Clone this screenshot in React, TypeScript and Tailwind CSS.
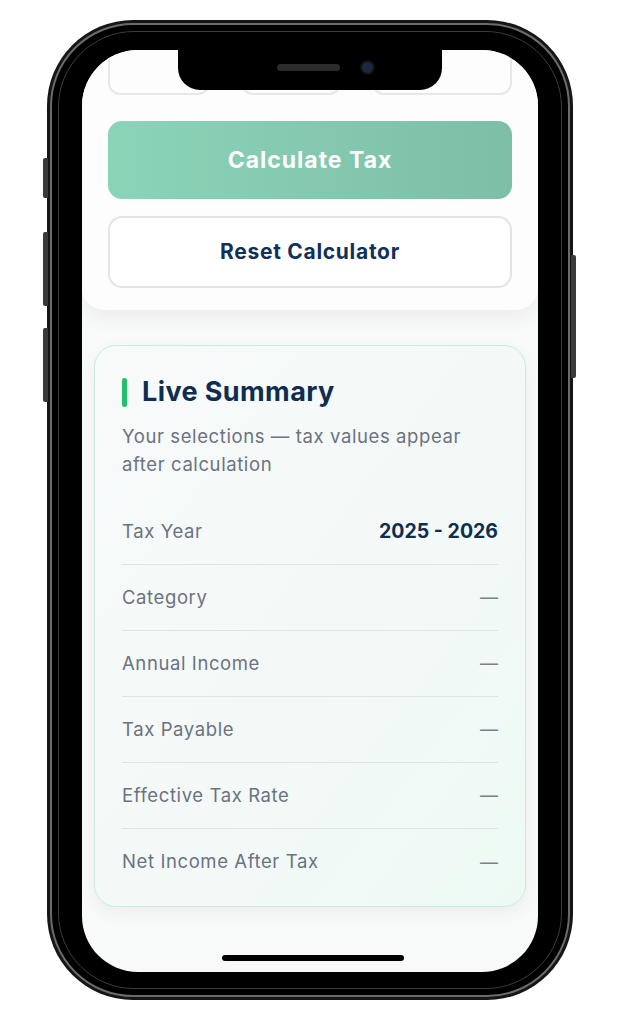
const rows: { label: string; value: string; strong?: boolean }[] = [
  { label: "Tax Year", value: "2025 - 2026", strong: true },
  { label: "Category", value: "—" },
  { label: "Annual Income", value: "—" },
  { label: "Tax Payable", value: "—" },
  { label: "Effective Tax Rate", value: "—" },
  { label: "Net Income After Tax", value: "—" },
];

function SummaryCard() {
  return (
    <div className="mx-[12px] mt-[35px] h-[562px] rounded-[22px] border border-[#c9ecdd] bg-gradient-to-br from-[#f8fafa] via-[#f4f9f8] to-[#edfaf4] px-[27px] pt-[32px] shadow-[0_6px_18px_rgba(0,0,0,0.05)]">
      <div className="flex h-[29px] items-center gap-[15px]">
        <div className="h-[29px] w-[5px] rounded-full bg-[#22c06a]" />
        <div className="text-[27px] font-bold tracking-[0.4px] text-[#0f2d50]">Live Summary</div>
      </div>
      <p className="mt-[15px] text-[18.5px] leading-[28px] tracking-[0.6px] text-[#6b7280]">
        Your selections — tax values appear after calculation
      </p>
      <div className="mt-[21px]">
        {rows.map((r, i) => (
          <div
            key={r.label}
            className={
              "flex h-[66px] items-center justify-between " +
              (i < rows.length - 1 ? "border-b border-[#dde5e4]" : "")
            }
          >
            <span className="text-[18.5px] tracking-[0.6px] text-[#6b7280]">{r.label}</span>
            {r.strong ? (
              <span className="text-[19.5px] font-bold text-[#0f2d50]">{r.value}</span>
            ) : (
              <span className="text-[18px] text-[#7a8088]">{r.value}</span>
            )}
          </div>
        ))}
      </div>
    </div>
  );
}

function FormPanel() {
  return (
    <div className="rounded-b-[22px] bg-[#fdfdfd] px-[26px] pb-[22px] shadow-[0_8px_20px_rgba(0,0,0,0.05)]">
      <div className="-mt-[35px] flex h-[80px] justify-between">
        <div className="w-[102px] rounded-[12px] border-2 border-[#e6e7e8]" />
        <div className="w-[100px] rounded-[12px] border-2 border-[#e6e7e8]" />
        <div className="w-[140px] rounded-[12px] border-2 border-[#e6e7e8]" />
      </div>
      <button className="mt-[26px] flex h-[78px] w-full items-center justify-center rounded-[14px] bg-gradient-to-r from-[#8bd4b8] to-[#7dbea7] text-[23px] font-bold tracking-[1px] text-white">
        Calculate Tax
      </button>
      <button className="mt-[17px] flex h-[72px] w-full items-center justify-center rounded-[14px] border-2 border-[#e2e4e6] bg-white text-[21px] font-bold tracking-[0.7px] text-[#12315a]">
        Reset Calculator
      </button>
    </div>
  );
}

export default function App() {
  return (
    <div
      className="h-[1024px] w-[621px] overflow-hidden bg-white pl-[47px] pt-[20px]"
      style={{ fontFamily: "Inter, 'Noto Sans', sans-serif" }}
    >
      <div className="relative h-[980px] w-[526px]">
        {/* side buttons */}
        <div className="absolute -left-[4px] top-[138px] h-[40px] w-[5px] rounded-l-[2px] bg-[#3a3a3a]" />
        <div className="absolute -left-[4px] top-[212px] h-[74px] w-[5px] rounded-l-[2px] bg-[#3a3a3a]" />
        <div className="absolute -left-[4px] top-[308px] h-[74px] w-[5px] rounded-l-[2px] bg-[#3a3a3a]" />
        <div className="absolute -right-[3px] top-[235px] h-[123px] w-[5px] rounded-r-[2px] bg-[#3a3a3a]" />

        {/* metallic frame */}
        <div className="h-full w-full rounded-[86px] bg-[#151515] p-[3px]">
          <div className="h-full w-full rounded-[83px] border-2 border-[#6b6b6b] bg-black p-[6px]">
            <div className="h-full w-full rounded-[76px] border border-[#3c3c3c] bg-black px-[23px] pb-[16px] pt-[18px]">
              <div className="relative h-full w-full overflow-hidden rounded-[56px] bg-[#f8f9f9]">
                <FormPanel />
                <SummaryCard />

                {/* notch */}
                <div className="absolute left-[96px] top-0 flex h-[40px] w-[264px] items-center justify-center gap-[22px] rounded-b-[22px] bg-black pb-[6px] pl-[30px]">
                  <div className="h-[7px] w-[63px] rounded-full bg-[#2b2b2b]" />
                  <div className="h-[11px] w-[11px] rounded-full bg-[#1b2840] ring-2 ring-[#111]" />
                </div>
                {/* home indicator */}
                <div className="absolute bottom-[11px] left-[140px] h-[6px] w-[182px] rounded-full bg-black" />
              </div>
            </div>
          </div>
        </div>
      </div>
    </div>
  );
}
